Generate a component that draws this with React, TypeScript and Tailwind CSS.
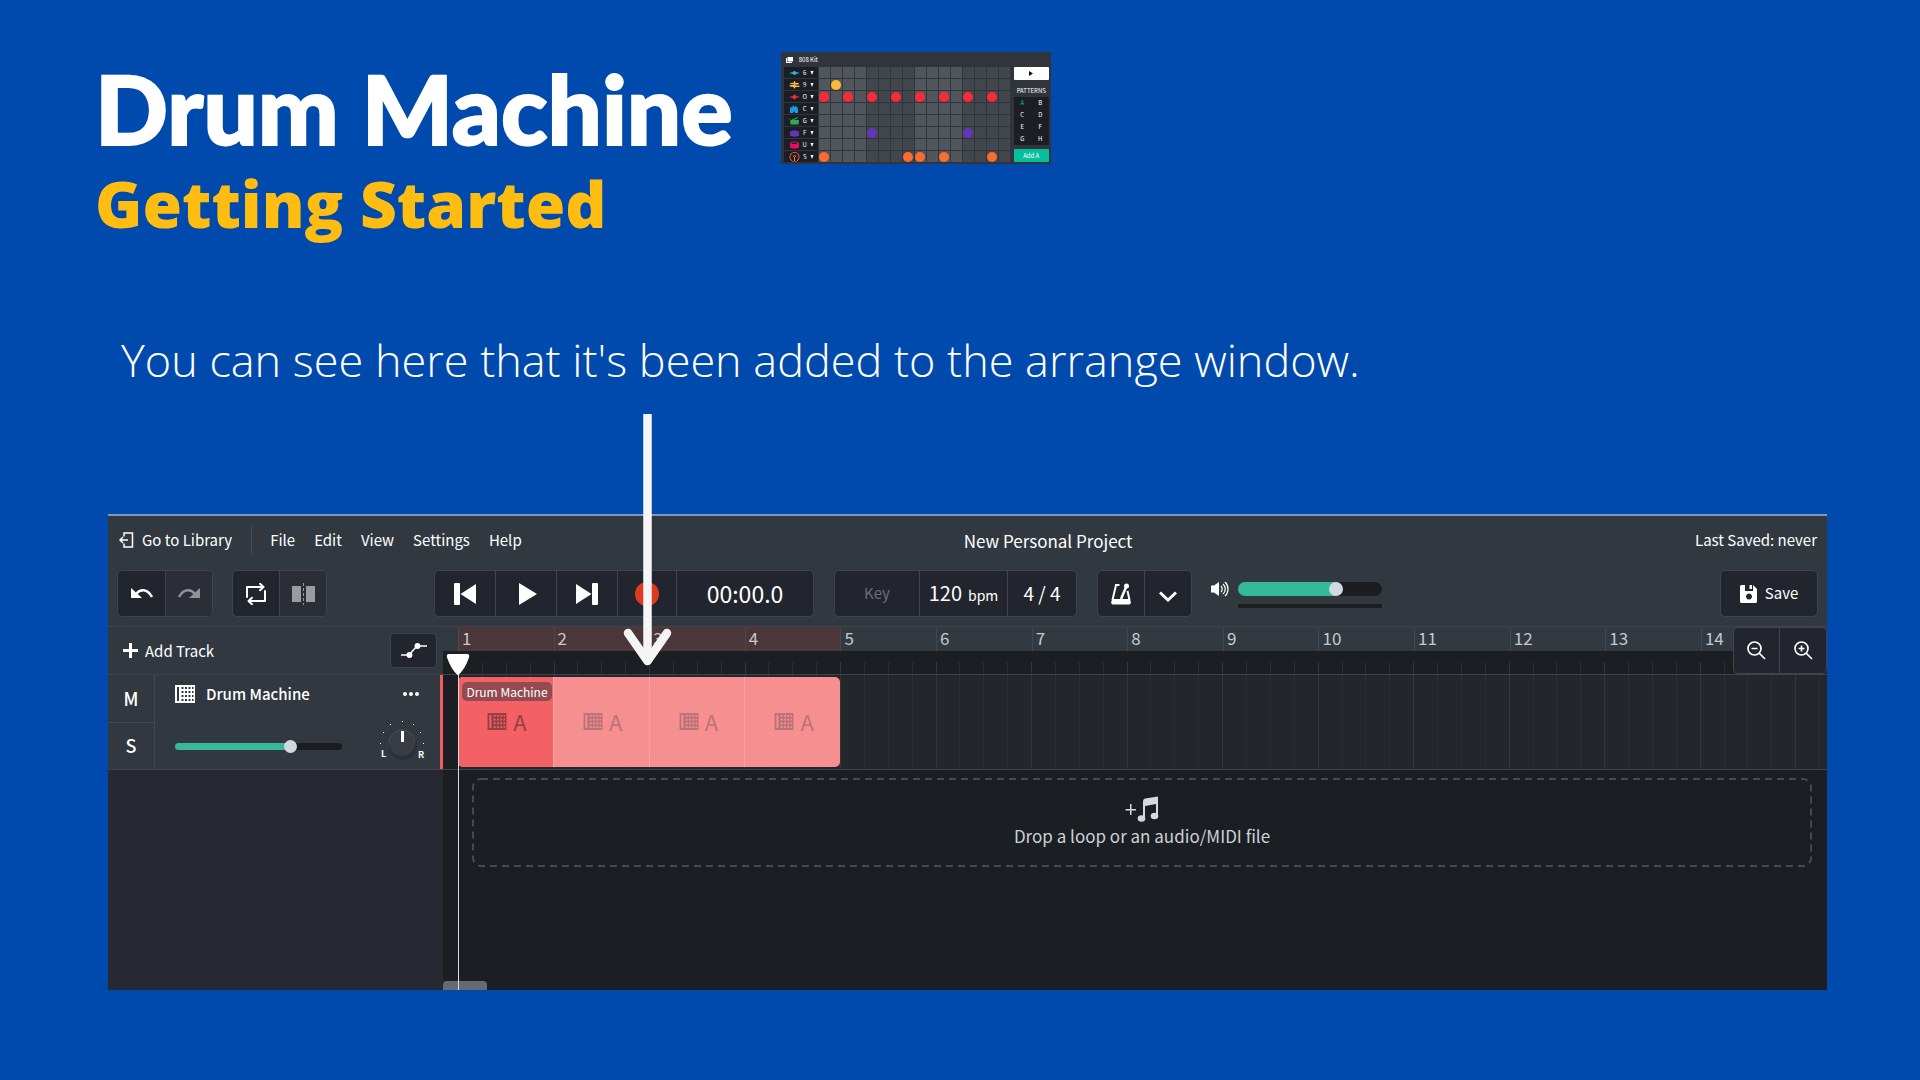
import type { ReactNode } from "react";

const BARS = [1, 2, 3, 4, 5, 6, 7, 8, 9, 10, 11, 12, 13, 14];
const UI_FONT = "font-['Noto_Sans_CJK_SC','Noto_Sans',sans-serif]";

const PADS: { color: string; note: string; hits: number[]; icon: ReactNode }[] = [
  {
    color: "#22b8cf",
    note: "6",
    hits: [],
    icon: <path d="M0 4 4 3 5 2h1l1 1 4 1-4 1-1 1H5L4 5Z" />,
  },
  {
    color: "#ffb938",
    note: "9",
    hits: [1],
    icon: <path d="M1 2.200 5 1.500V0h1v1.500l4 .7v1l-4 .5v.6l4.500.5v1.200L6.500 6 6 7.500H5L4.500 6 .5 5.500V4.300L5 3.800v-.6l-4-.2Z" />,
  },
  {
    color: "#fc2a38",
    note: "O",
    hits: [0, 2, 4, 6, 8, 10, 12, 14],
    icon: <path d="M0 4 4 3 5 1.500h1L7 3l4 1-4 1-1 1.500H5L4 5Z" />,
  },
  {
    color: "#189ce0",
    note: "C",
    hits: [],
    icon: <path d="M1 8V3l1-1.500L3 3l1-3 1.500 2L7 1l1 1 1 2v4H6L5 6 4 8Z" />,
  },
  {
    color: "#31a84f",
    note: "G",
    hits: [],
    icon: <path d="M1 3.500 9 0v1L5 3h5l-.5 4.500h-8ZM1.500 3 0 2l1-.5Z" />,
  },
  {
    color: "#6236b8",
    note: "F",
    hits: [4, 12],
    icon: <path d="M1 2.500C3 1 8 1 10 2.500v4C8 8 3 8 1 6.500Z" />,
  },
  {
    color: "#e60f63",
    note: "U",
    hits: [],
    icon: (
      <path
        fillRule="evenodd"
        d="M1 2C3 0 8 0 10 2v4.500C8 8 3 8 1 6.500Zm1 .2c2 1.200 5 1.200 7 0C7 1 4 1 2 2.200Z"
      />
    ),
  },
  {
    color: "#ff6a32",
    note: "S",
    hits: [0, 7, 8, 10, 14],
    icon: (
      <path
        fillRule="evenodd"
        d="M5.500-1a5 5 0 1 0 .01 0Zm0 .8a4.200 4.200 0 1 1-.01 0ZM5 2h1v7H5ZM4 2.500h3v1.500H4Z"
      />
    ),
  },
];

function MiniDrumMachine() {
  return (
    <section
      aria-label="808 Kit"
      className={`mt-[52px] h-[112px] w-[270px] overflow-hidden bg-[#30353c] pl-[3px] text-white ${UI_FONT}`}
    >
      <div className="flex h-[15px] items-center gap-[6px] pl-[2px] text-[6px] leading-none">
        <svg viewBox="0 0 7 6" className="h-[6px] w-[7px]" fill="white">
          <path d="M1.500 0H7v4.500H1.500ZM0 1h1v4h5v1H0Z" />
        </svg>
        <span>808 Kit</span>
      </div>
      <div className="flex gap-[3px]">
        <div>
          {PADS.map((pad) => (
            <div key={pad.note} className="flex h-[12px]">
              <div className="mr-[1px] flex h-[11px] w-[34px] items-center justify-between bg-[#1b1e25] pr-[4px] pl-[5px] text-[6px] leading-none">
                <svg viewBox="0 0 11 8" className="h-[8px] w-[11px] overflow-visible" fill={pad.color}>
                  {pad.icon}
                </svg>
                <span>{pad.note}</span>
                <svg viewBox="0 0 4 4" className="size-[4px]" fill="white">
                  <path d="M.5 0h3L2 4Z" />
                </svg>
              </div>
              {Array.from({ length: 16 }, (_, i) => (
                <div
                  key={i}
                  className={`mr-[1px] flex h-[11px] w-[11px] items-center justify-center ${
                    Math.floor(i / 4) % 2 === 0 ? "bg-[#51565c]" : "bg-[#42474d]"
                  }`}
                >
                  {pad.hits.includes(i) && (
                    <span className="size-[10px] shrink-0 rounded-full" style={{ background: pad.color }} />
                  )}
                </div>
              ))}
            </div>
          ))}
        </div>
        <div className="flex w-[35px] flex-col text-center text-[6px] leading-none">
          <button aria-label="Play pattern" className="flex h-[13px] items-center justify-center rounded-[1px] bg-white">
            <svg viewBox="0 0 4 5" className="h-[5px] w-[4px]" fill="#111">
              <path d="M0 0l4 2.500L0 5Z" />
            </svg>
          </button>
          <div className="flex h-[17px] items-center justify-center pt-[4px]">PATTERNS</div>
          <div className="grid grid-cols-2 gap-x-[1px] bg-[#1b1e25]">
            {["A", "B", "C", "D", "E", "F", "G", "H"].map((p) => (
              <button key={p} className={`h-[12px] ${p === "A" ? "text-[#06bf9c]" : "text-white"}`}>
                {p}
              </button>
            ))}
          </div>
          <button className="mt-[4px] h-[13px] rounded-[1px] bg-[#06bf9c]">Add A</button>
        </div>
      </div>
    </section>
  );
}

function DrumIcon({ className }: { className: string }) {
  return (
    <svg viewBox="0 0 20 18" className={className} fill="currentColor">
      <path
        fillRule="evenodd"
        d="M0 0h20v18H0ZM2 2v14h2V2ZM6.500 2v2h2V2Zm3.500 0v2h2V2Zm3.500 0v2h2V2Zm3.500 0v2h1.500V2ZM6.500 6v2h2V6Zm3.500 0v2h2V6Zm3.500 0v2h2V6Zm3.500 0v2h1.500V6ZM6.500 10v2h2v-2Zm3.500 0v2h2v-2Zm3.500 0v2h2v-2Zm3.500 0v2h1.500v-2ZM6.500 14v2h2v-2Zm3.500 0v2h2v-2Zm3.500 0v2h2v-2Zm3.500 0v2h1.500v-2Z"
      />
    </svg>
  );
}

function Group({ className = "", children }: { className?: string; children: ReactNode }) {
  return (
    <div
      className={`flex h-[47px] shrink-0 divide-x divide-[#3f434e] overflow-hidden rounded-[5px] border border-[#3f434e] bg-[#22252d] ${className}`}
    >
      {children}
    </div>
  );
}

function ToolButton({ label, className, children }: { label: string; className: string; children: ReactNode }) {
  return (
    <button aria-label={label} className={`flex items-center justify-center ${className}`}>
      {children}
    </button>
  );
}

function MenuBar() {
  return (
    <div className="flex h-[50px] items-center pr-[10px] pb-[2px] pl-[11px] text-[15px] leading-[24px]">
      <a href="#library" className="flex items-center gap-[8px]">
        <svg viewBox="0 0 15 16" className="h-[16px] w-[15px]" fill="none" stroke="white" strokeWidth="1.500">
          <path d="M5 4.500V1h8.500v14H5v-3.500M1 8h8M4 5 1 8l3 3" />
        </svg>
        Go to Library
      </a>
      <div className="ml-[19px] h-[28px] w-px bg-[#454a55]" />
      <nav className="ml-[18px] flex gap-[19px]">
        {["File", "Edit", "View", "Settings", "Help"].map((m) => (
          <button key={m}>{m}</button>
        ))}
      </nav>
      <div className="grow-[11]" />
      <h2 className="pt-[1px] text-[17px]">New Personal Project</h2>
      <div className="grow-[14]" />
      <span>Last Saved: never</span>
    </div>
  );
}

function Toolbar() {
  return (
    <div className="flex h-[61px] items-start border-b border-[#3f434e] pt-[4px] pr-[9px] pl-[9px]">
      <Group>
        <ToolButton label="Undo" className="w-[48px]">
          <svg viewBox="0 0 22 12" className="h-[12px] w-[22px]" fill="none">
            <path d="M0 0 11 10H0Z" fill="white" />
            <path d="M5 6C9 1 16 0 21 9" stroke="white" strokeWidth="2.500" />
          </svg>
        </ToolButton>
        <ToolButton label="Redo" className="w-[46px] bg-[#2b2e36]">
          <svg viewBox="0 0 22 12" className="h-[12px] w-[22px]" fill="none">
            <path d="M22 0 11 10h11Z" fill="#8f9296" />
            <path d="M17 6C13 1 6 0 1 9" stroke="#8f9296" strokeWidth="2.500" />
          </svg>
        </ToolButton>
      </Group>
      <Group className="ml-[19px]">
        <ToolButton label="Loop" className="w-[47px]">
          <svg viewBox="0 0 20 22" className="h-[22px] w-[20px]" fill="none" stroke="white" strokeWidth="2">
            <path d="M1 14V4h16M14 .8 17.500 4 14 7.200M19 8v10H3M6 14.800 2.500 18 6 21.200" strokeLinejoin="round" strokeLinecap="round" />
          </svg>
        </ToolButton>
        <ToolButton label="Split" className="w-[46px] bg-[#2b2e36]">
          <svg viewBox="0 0 23 22" className="h-[22px] w-[23px]" fill="#989ba0">
            <path d="M0 3h9v16H0ZM14 3h9v16h-9ZM11 0h1v3h-1ZM11 5h1v3h-1ZM11 10h1v3h-1ZM11 15h1v3h-1ZM11 20h1v2h-1Z" />
          </svg>
        </ToolButton>
      </Group>
      <Group className="ml-[107px]">
        <ToolButton label="Go to start" className="w-[61px]">
          <svg viewBox="0 0 22 22" className="size-[22px]" fill="white">
            <rect y="0" width="6" height="22" rx="1" />
            <path d="M22 1v20L6.500 11Z" />
          </svg>
        </ToolButton>
        <ToolButton label="Play" className="w-[61px] pl-[4px]">
          <svg viewBox="0 0 18 22" className="h-[22px] w-[18px]" fill="white">
            <path d="M0 0l18 11L0 22Z" />
          </svg>
        </ToolButton>
        <ToolButton label="Go to end" className="w-[61px]">
          <svg viewBox="0 0 22 22" className="size-[22px]" fill="white">
            <rect x="16" width="6" height="22" rx="1" />
            <path d="M0 1v20l15.500-10Z" />
          </svg>
        </ToolButton>
        <ToolButton label="Record" className="w-[59px]">
          <span className="size-[24px] rounded-full bg-[#dd3a1e]" />
        </ToolButton>
        <div className="flex w-[136px] items-center justify-center text-[23px] leading-none">00:00.0</div>
      </Group>
      <Group className="ml-[20px]">
        <button className="w-[85px] text-[15px] text-[#6b6e74]">Key</button>
        <button className="flex w-[88px] items-baseline justify-center gap-[6px] pt-[7px] text-[20px]">
          120 <span className="text-[14px]">bpm</span>
        </button>
        <button className="w-[68px] text-[19px]">4 / 4</button>
      </Group>
      <Group className="ml-[20px]">
        <ToolButton label="Metronome" className="w-[47px]">
          <svg viewBox="0 0 20 22" className="h-[22px] w-[20px]" fill="none" stroke="white">
            <path d="M8.500 2H5L1.500 17M16.500 8l2 9" strokeWidth="2" />
            <path d="M1 16h18l1 4-1.500 1.500h-17L0 20Z" fill="white" stroke="none" />
            <path d="M10 16 15.500 3" strokeWidth="2.500" />
            <circle cx="15.500" cy="3" r="2.500" fill="white" stroke="none" />
          </svg>
        </ToolButton>
        <ToolButton label="Metronome options" className="w-[46px] pt-[6px]">
          <svg viewBox="0 0 18 11" className="h-[11px] w-[18px]" fill="none" stroke="white" strokeWidth="3">
            <path d="M1 1.500 9 9l8-7.500" />
          </svg>
        </ToolButton>
      </Group>
      <label className="ml-[19px] pt-[11px]" htmlFor="master">
        <svg viewBox="0 0 18 16" className="h-[16px] w-[18px]" fill="white">
          <path d="M0 4.500h3L8 1v14l-5-3.500H0Z" />
          <path d="M10 5c1.500 1.500 1.500 4.500 0 6M12 3c3 2.500 3 7.500 0 10M14 1c4 3.500 4 10.500 0 14" fill="none" stroke="white" strokeWidth="1.200" />
        </svg>
      </label>
      <div className="ml-[9px] flex w-[144px] flex-col gap-[8px] pt-[12px]">
        <input
          id="master"
          aria-label="Master volume"
          type="range"
          defaultValue={70}
          className="h-[14px] w-full appearance-none rounded-full bg-[linear-gradient(to_right,#36b899_68%,#1b1d21_68%)] [&::-webkit-slider-thumb]:size-[14px] [&::-webkit-slider-thumb]:appearance-none [&::-webkit-slider-thumb]:rounded-full [&::-webkit-slider-thumb]:bg-[#d3d9e1]"
        />
        <div className="h-[4px] rounded-[1px] bg-[#1b1d21]" />
      </div>
      <button className="ml-auto flex h-[47px] w-[98px] items-center justify-center gap-[8px] rounded-[5px] border border-[#3f434e] bg-[#22252d] text-[15px]">
        <svg viewBox="0 0 17 18" className="h-[18px] w-[17px]" fill="white">
          <path fillRule="evenodd" d="M0 1 1 0h4v6h8V0l4 4v13l-1 1H1l-1-1Zm9 7.500a3 3 0 1 0 .01 0ZM9.500 0H12v4H9.500Z" />
        </svg>
        Save
      </button>
    </div>
  );
}

function TrackPanel() {
  return (
    <div className="flex w-[335px] shrink-0 flex-col bg-[#262932]">
      <div className="flex h-[48px] items-center justify-between border-b border-[#3f434e] bg-[#323840] pr-[6px] pl-[15px]">
        <button className="flex items-center gap-[7px] text-[15px] leading-none">
          <svg viewBox="0 0 15 15" className="size-[15px]" stroke="white" strokeWidth="3">
            <path d="M7.500 0v15M0 7.500h15" />
          </svg>
          Add Track
        </button>
        <button
          aria-label="Automation"
          className="flex h-[35px] w-[47px] items-center justify-center rounded-[4px] border border-[#3f434e] bg-[#22252d]"
        >
          <svg viewBox="0 0 26 15" className="h-[15px] w-[26px]" fill="white" stroke="white" strokeWidth="1.500">
            <path d="M0 12h8l8-9h10" fill="none" />
            <circle cx="8.500" cy="12" r="2.200" />
            <circle cx="16.500" cy="3" r="2.200" />
          </svg>
        </button>
      </div>
      <div className="flex h-[95px] border-b border-[#3f434e] bg-[#323840]">
        <div className="flex w-[47px] flex-col divide-y divide-[#434853] border-r border-[#434853] text-[18px] font-medium">
          <button className="flex-1">M</button>
          <button className="flex-1">S</button>
        </div>
        <div className="flex flex-1 flex-col">
          <div className="flex h-[38px] items-center pr-[21px] pl-[20px]">
            <DrumIcon className="h-[18px] w-[20px]" />
            <h3 className="ml-[11px] text-[15px] font-medium">Drum Machine</h3>
            <button aria-label="Track options" className="ml-auto">
              <svg viewBox="0 0 16 4" className="h-[4px] w-[16px]" fill="white">
                <circle cx="2" cy="2" r="2" />
                <circle cx="8" cy="2" r="2" />
                <circle cx="14" cy="2" r="2" />
              </svg>
            </button>
          </div>
          <div className="flex h-[56px] items-center pl-[20px]">
            <input
              aria-label="Track volume"
              type="range"
              defaultValue={71}
              className="mt-[10px] h-[7px] w-[167px] appearance-none rounded-full bg-[linear-gradient(to_right,#36b899_68%,#1b1d21_68%)] [&::-webkit-slider-thumb]:size-[13px] [&::-webkit-slider-thumb]:appearance-none [&::-webkit-slider-thumb]:rounded-full [&::-webkit-slider-thumb]:bg-[#d3d9e1]"
            />
            <label className="ml-[35px]">
              <input type="range" aria-label="Pan" className="sr-only" />
              <svg viewBox="0 0 50 44" className="h-[44px] w-[50px]" fill="white">
                <circle cx="26" cy="27" r="14" fill="#292c33" opacity=".7" />
                <circle cx="25" cy="24" r="13" fill="#383c45" />
                <path d="M12 24a13 13 0 0 1 26 0" fill="none" stroke="#4a4f59" />
                <rect x="24" y="12" width="3" height="11" />
                <path d="M25 2h1v1h-1ZM13 5h1v1h-1ZM36 5h1v1h-1ZM6 13h1v1H6ZM43 13h1v1h-1ZM3 24h1v1H3ZM46 24h1v1h-1Z" />
                <text x="4" y="38" fontSize="9" fontWeight="700">L</text>
                <text x="41" y="39" fontSize="9" fontWeight="700">R</text>
              </svg>
            </label>
          </div>
        </div>
        <div className="w-[3px] bg-[#f25c61]" />
      </div>
    </div>
  );
}

function BeatLines({ className }: { className: string }) {
  return (
    <div aria-hidden="true" className={`absolute inset-x-0 bottom-0 flex overflow-hidden pl-[15px] ${className}`}>
      {[...BARS, 15].map((n) => (
        <div key={n} className={`flex min-w-0 ${n === 15 ? "flex-[1]" : "flex-[3]"}`}>
          {(n === 15 ? [0, 1] : [0, 1, 2, 3]).map((b) => (
            <div
              key={b}
              className={`border-l ${b === 0 ? "border-[#33373d]" : "border-[#2b2f34]"} ${
                n === 15 && b === 0 ? "w-3/4" : "flex-1"
              }`}
            />
          ))}
        </div>
      ))}
    </div>
  );
}

function Arranger() {
  return (
    <div className="relative flex min-w-0 flex-1 flex-col bg-[#1b1e22]">
      <div className="relative h-[48px] border-b border-[#3f434e]">
        <div className="flex h-[24px] bg-[#323940] text-[17px] leading-[22px] text-[#c3c9d0]">
          <div className="w-[15px] shrink-0" />
          {BARS.map((n) => (
            <div
              key={n}
              className={`min-w-0 flex-[3] border-l pl-[3px] ${
                n < 5 ? "border-[#584346] bg-[#4b3739]" : "border-[#41464f]"
              }`}
            >
              {n}
            </div>
          ))}
          <div className="flex-[1]" />
        </div>
        <BeatLines className="h-[12px]" />
        <Group className="absolute top-0 right-0">
          <ToolButton label="Zoom out" className="w-[46px]">
            <ZoomGlyph />
          </ToolButton>
          <ToolButton label="Zoom in" className="w-[46px]">
            <ZoomGlyph plus />
          </ToolButton>
        </Group>
      </div>
      <div className="relative h-[95px] border-b border-[#3f434e] pl-[15px]">
        <div className="absolute inset-y-0 right-0 left-[15px] bg-[#23262b]" />
        <BeatLines className="h-full" />
        <div className="relative grid grid-cols-[repeat(43,minmax(0,1fr))] pt-[2px]">
          <div className="relative col-span-12 flex h-[90px] overflow-hidden rounded-[5px] bg-[#f69090]">
            {[0, 1, 2, 3].map((i) => (
              <div
                key={i}
                className={`flex flex-1 items-center justify-center gap-[6px] pb-[2px] pl-[3px] text-[22px] leading-none ${
                  i === 0 ? "bg-[#f36164] text-[#983f45]" : "border-l border-[#f8a5a5] text-[#bc7377]"
                }`}
              >
                <DrumIcon className="h-[17px] w-[20px]" />
                <span>A</span>
              </div>
            ))}
            <span className="absolute top-[5px] left-[4px] flex h-[19px] w-[90px] items-center justify-center rounded-[5px] bg-[#934a50] text-[12px] leading-[18px] whitespace-nowrap">
              Drum Machine
            </span>
          </div>
        </div>
      </div>
      <button className="relative mt-[8px] mr-[15px] ml-[29px] flex h-[89px] flex-col items-center justify-center pb-[1px] text-[#ccd2d9]">
        <svg aria-hidden="true" className="absolute inset-0 h-full w-full" fill="none">
          <rect x="1" y="1" width="99.850%" height="87" rx="8" stroke="#454954" strokeWidth="2" strokeDasharray="7 5" />
        </svg>
        <svg viewBox="0 0 34 26" className="h-[26px] w-[34px]" fill="#d3d9e1">
          <path d="M5 8h1.500v5H11v1.500H6.500V19H5v-4.500H.5V13H5Z" />
          <path d="M18 5q0-2 2-2.500L33 .5V20h-2V8l-11 2v12h-2Z" />
          <ellipse cx="16.500" cy="22.500" rx="3.800" ry="3.200" />
          <ellipse cx="29.500" cy="20" rx="3.800" ry="3.200" />
        </svg>
        <span className="text-[17px] leading-[27px]">Drop a loop or an audio/MIDI file</span>
      </button>
      <div className="mt-[114px] h-[9px] w-[44px] rounded-t-[4px] bg-[#676a6e]" />
      <div className="absolute top-[27px] bottom-0 left-[3px] flex w-[24px] flex-col items-center">
        <svg viewBox="0 0 24 21" className="h-[21px] w-[24px] shrink-0" fill="white">
          <path d="M3 0h18q3 0 2 3.500Q19 15 12.500 21h-1Q5 15 1 3.500 0 0 3 0Z" />
        </svg>
        <div className="w-px flex-1 bg-[#d9dbdd]" />
      </div>
    </div>
  );
}

function ZoomGlyph({ plus = false }: { plus?: boolean }) {
  return (
    <svg viewBox="0 0 19 19" className="size-[19px]" fill="none" stroke="white" strokeWidth="1.700">
      <circle cx="7.500" cy="7.500" r="6.500" />
      <path d="M12 12l6 6M4.500 7.500h6" />
      {plus && <path d="M7.500 4.500v6" />}
    </svg>
  );
}

export default function App() {
  return (
    <main className="relative min-h-screen overflow-hidden bg-[#004aad] pb-[90px] text-white">
      <header className="flex items-start gap-[48px] pl-[95px]">
        <div>
          <h1 className="pt-[48px] font-['Lato',sans-serif] text-[96px] leading-[120px] font-black whitespace-nowrap [-webkit-text-stroke:2px_white]">
            Drum Machine
          </h1>
          <p className="pt-[2px] font-['Open_Sans',sans-serif] text-[64px] leading-[68px] font-extrabold whitespace-nowrap text-[#ffbd11]">
            Getting Started
          </p>
        </div>
        <MiniDrumMachine />
      </header>
      <p className="mt-[92px] pl-[121px] font-['Open_Sans',sans-serif] text-[45px] leading-[60px] font-light">
        You can see here that it's been added to the arrange window.
      </p>
      <section
        aria-label="Arrange window"
        className={`mt-[124px] mr-[93px] ml-[108px] overflow-hidden border-t-2 border-[#7f98b8] bg-[#323840] ${UI_FONT}`}
      >
        <MenuBar />
        <Toolbar />
        <div className="flex">
          <TrackPanel />
          <Arranger />
        </div>
      </section>
      <svg
        aria-hidden="true"
        viewBox="0 0 50 254"
        className="absolute top-[413px] left-[622px] h-[254px] w-[50px]"
        fill="none"
        stroke="#f5f5f5"
      >
        <path d="M25.500 1v240" strokeWidth="8.500" />
        <path d="M6 220 25.500 248 45 220" strokeWidth="8.500" strokeLinecap="round" strokeLinejoin="round" />
      </svg>
    </main>
  );
}
